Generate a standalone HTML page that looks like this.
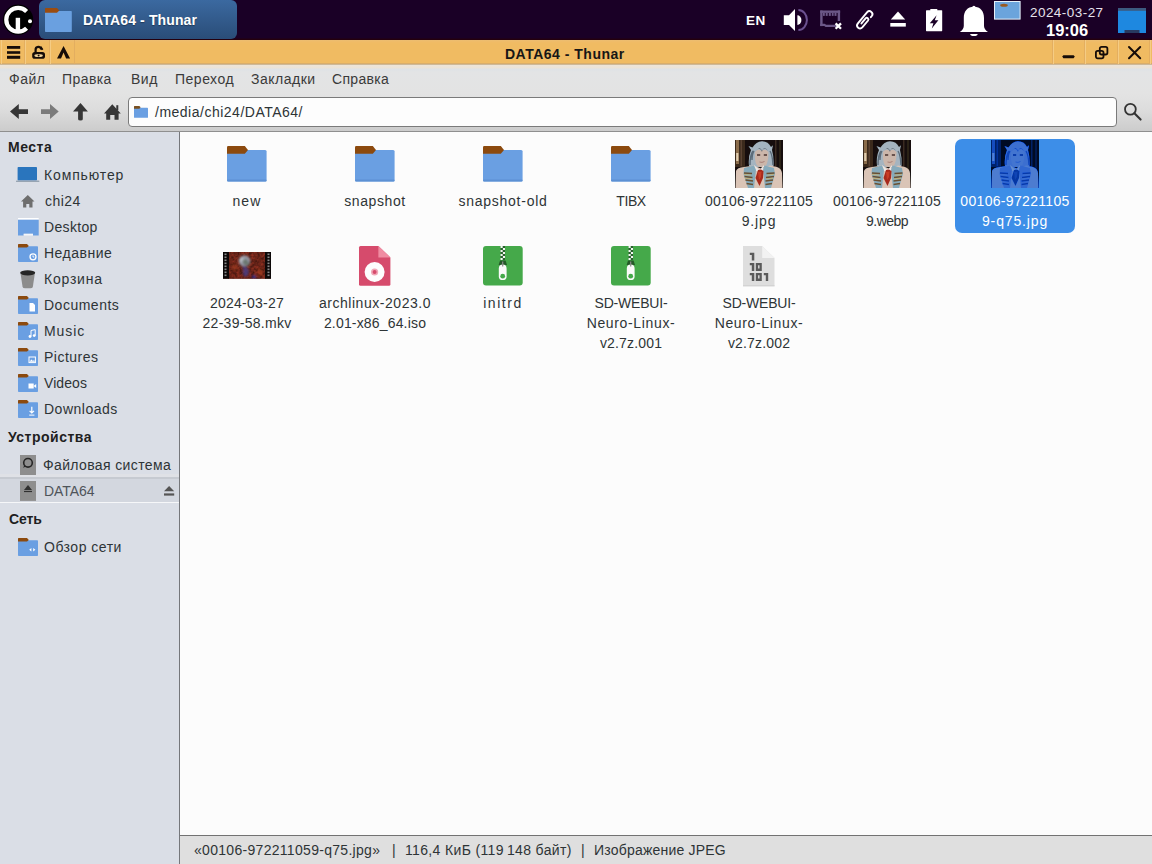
<!DOCTYPE html>
<html><head><meta charset="utf-8">
<style>
*{margin:0;padding:0;box-sizing:border-box}
html,body{width:1152px;height:864px;overflow:hidden;background:#fcfcfc;font-family:"Liberation Sans",sans-serif;font-size:14px;letter-spacing:0.5px;color:#2e3436}
.a{position:absolute}
svg{position:absolute;overflow:visible}
#panel{left:0;top:0;width:1152px;height:40px;background:linear-gradient(#1a0026 0,#1a0026 38px,#24000e 39px)}
#task{left:39px;top:0;width:198px;height:39px;border-radius:6px;background:linear-gradient(#3b69a0,#2a4d78)}
#title{left:0;top:40px;width:1152px;height:24px;background:linear-gradient(#ebbd72 0,#f0bb66 2px,#f0bb62 4px,#f0bb62 23px,#d9ad6a 23px)}
#menubar{left:0;top:64px;width:1152px;height:67px;background:linear-gradient(#cdb898 0px,#cdb898 1px,#ede4d8 1px,#ebe3d7 4px,#dee2e6 5px,#e3e4e5 8px,#e3e3e3 30px,#dddddd 45px,#cccccc 67px)}
#toolbar{left:0;top:92px;width:1152px;height:39px;background:linear-gradient(#e4e4e4,#d6d6d6)}
#tbline{left:0;top:131px;width:1152px;height:1px;background:#8f8f8f}
#side{left:0;top:132px;width:179px;height:732px;background:#dadee6}
#sideb{left:179px;top:132px;width:1px;height:732px;background:#75777b}
#main{left:180px;top:132px;width:972px;height:703px;background:#fcfcfc}
#status{left:180px;top:835px;width:972px;height:29px;background:#dfdfdf;border-top:1px solid #727272}
.t{position:absolute;white-space:nowrap;line-height:20px;height:20px}
.lbl{position:absolute;width:124px;text-align:center;line-height:20px;white-space:nowrap}
.hd{font-weight:bold;color:#1f1f1f}
.mn{color:#3a3a3a}
</style></head><body>
<div id="panel" class="a"></div>
<div id="task" class="a"></div>
<div id="title" class="a"></div>
<div id="menubar" class="a"></div>
<div id="tbline" class="a"></div>
<div id="side" class="a"></div>
<div id="sideb" class="a"></div>
<div id="main" class="a"></div>
<div id="status" class="a"></div>

<!-- panel texts -->
<div class="t" style="left:83px;top:10px;color:#fff;font-weight:bold;letter-spacing:0.12px;text-shadow:0 1px 1px rgba(0,0,0,0.35)">DATA64 - Thunar</div>
<div class="t" style="left:746px;top:11px;color:#fff;font-weight:bold;font-size:13.5px;letter-spacing:0.5px">EN</div>
<div class="t" style="left:1030px;top:3px;color:#e6e2ec;font-size:13.5px;letter-spacing:0.45px">2024-03-27</div>
<div class="t" style="left:1046px;top:20px;color:#fff;font-weight:bold;font-size:16.5px;letter-spacing:0px">19:06</div>

<!-- title -->
<div class="t" style="left:505px;top:44px;color:#161616;font-weight:bold">DATA64 - Thunar</div>

<!-- menu -->
<div id="M0" class="t mn" style="left:9px;top:69px;letter-spacing:0.5px">Файл</div>
<div id="M1" class="t mn" style="left:62px;top:69px;letter-spacing:0.42px">Правка</div>
<div id="M2" class="t mn" style="left:131px;top:69px;letter-spacing:0.5px">Вид</div>
<div id="M3" class="t mn" style="left:175px;top:69px;letter-spacing:0.5px">Переход</div>
<div id="M4" class="t mn" style="left:251px;top:69px;letter-spacing:0.5px">Закладки</div>
<div id="M5" class="t mn" style="left:332px;top:69px;letter-spacing:0.32px">Справка</div>

<!-- entry -->
<div class="a" style="left:128px;top:97px;width:989px;height:30px;background:#fdfdfd;border:1px solid #7a7a7a;border-radius:4px"></div>
<div id="P0" class="t" style="left:155px;top:102px;color:#2e3436;letter-spacing:0.5px">/media/chi24/DATA64/</div>

<!-- sidebar text -->
<div id="S0" class="t hd" style="left:8px;top:137px;letter-spacing:0.5px">Места</div>
<div id="S1" class="t" style="left:44px;top:165px;letter-spacing:0.86px">Компьютер</div>
<div id="S2" class="t" style="left:45px;top:191px;letter-spacing:0.48px">chi24</div>
<div id="S3" class="t" style="left:44px;top:217px;letter-spacing:0.33px">Desktop</div>
<div id="S4" class="t" style="left:44px;top:243px;letter-spacing:0.5px">Недавние</div>
<div id="S5" class="t" style="left:44px;top:269px;letter-spacing:0.77px">Корзина</div>
<div id="S6" class="t" style="left:44px;top:295px;letter-spacing:0.5px">Documents</div>
<div id="S7" class="t" style="left:44px;top:321px;letter-spacing:0.95px">Music</div>
<div id="S8" class="t" style="left:44px;top:347px;letter-spacing:0.5px">Pictures</div>
<div id="S9" class="t" style="left:44px;top:373px;letter-spacing:0.08px">Videos</div>
<div id="S10" class="t" style="left:44px;top:399px;letter-spacing:0.5px">Downloads</div>
<div id="S11" class="t hd" style="left:8px;top:427px;letter-spacing:0.5px">Устройства</div>
<div id="S12" class="t" style="left:43px;top:455px;letter-spacing:0.37px">Файловая система</div>
<div class="a" style="left:0;top:474px;width:179px;height:4px;background:#dfe1e6"></div><div class="a" style="left:0;top:477px;width:179px;height:26px;background:#d3d7df;border-top:2px solid #c6cad1;border-bottom:1px solid #f6f7f9"></div>
<div id="S13" class="t" style="left:44px;top:481px;color:#4f545a;letter-spacing:-0.08px">DATA64</div>
<div id="S14" class="t hd" style="left:9px;top:509px;letter-spacing:-0.1px">Сеть</div>
<div id="S15" class="t" style="left:44px;top:537px;letter-spacing:0.5px">Обзор сети</div>

<!-- selection -->
<div class="a" style="left:955px;top:139px;width:120px;height:94px;background:#3d8ee8;border-radius:7px"></div>

<!-- labels -->
<div id="L0" class="lbl" style="left:185px;top:191px;letter-spacing:1.15px">new</div>
<div id="L1" class="lbl" style="left:313px;top:191px;letter-spacing:0.61px">snapshot</div>
<div id="L2" class="lbl" style="left:441px;top:191px;letter-spacing:0.75px">snapshot-old</div>
<div id="L3" class="lbl" style="left:569px;top:191px;letter-spacing:-0.43px">TIBX</div>
<div id="L4" class="lbl" style="left:697px;top:191px;letter-spacing:0.22px">00106-97221105</div>
<div id="L5" class="lbl" style="left:697px;top:211px;letter-spacing:0.87px">9.jpg</div>
<div id="L6" class="lbl" style="left:825px;top:191px;letter-spacing:0.22px">00106-97221105</div>
<div id="L7" class="lbl" style="left:825px;top:211px;letter-spacing:-0.54px">9.webp</div>
<div id="L8" class="lbl" style="left:953px;top:191px;letter-spacing:0.32px;color:#fff">00106-97221105</div>
<div id="L9" class="lbl" style="left:953px;top:211px;letter-spacing:0.85px;color:#fff">9-q75.jpg</div>
<div id="L10" class="lbl" style="left:185px;top:293px;letter-spacing:0.22px">2024-03-27</div>
<div id="L11" class="lbl" style="left:185px;top:313px;letter-spacing:0.28px">22-39-58.mkv</div>
<div id="L12" class="lbl" style="left:313px;top:293px;letter-spacing:0.54px">archlinux-2023.0</div>
<div id="L13" class="lbl" style="left:313px;top:313px;letter-spacing:0.17px">2.01-x86_64.iso</div>
<div id="L14" class="lbl" style="left:441px;top:293px;letter-spacing:1.54px">initrd</div>
<div id="L15" class="lbl" style="left:569px;top:293px;letter-spacing:-0.2px">SD-WEBUI-</div>
<div id="L16" class="lbl" style="left:569px;top:313px;letter-spacing:0.65px">Neuro-Linux-</div>
<div id="L17" class="lbl" style="left:569px;top:333px;letter-spacing:0.16px">v2.7z.001</div>
<div id="L18" class="lbl" style="left:697px;top:293px;letter-spacing:-0.2px">SD-WEBUI-</div>
<div id="L19" class="lbl" style="left:697px;top:313px;letter-spacing:0.65px">Neuro-Linux-</div>
<div id="L20" class="lbl" style="left:697px;top:333px;letter-spacing:0.16px">v2.7z.002</div>

<!-- status -->
<div class="t" style="left:194px;top:840px;letter-spacing:0.3px">«00106-972211059-q75.jpg»</div>
<div class="t" style="left:392px;top:840px">|</div>
<div class="t" style="left:405px;top:840px;letter-spacing:0.35px">116,4 КиБ (119&#8201;148 байт)</div>
<div class="t" style="left:581px;top:840px">|</div>
<div class="t" style="left:594px;top:840px;letter-spacing:0.2px">Изображение JPEG</div>

<!-- symbol defs -->
<svg width="0" height="0" style="position:absolute">
<defs>
<symbol id="fold" viewBox="0 0 40 36"><rect x="0" y="4" width="39.6" height="31.5" rx="1.5" fill="#6a9fe2"/><rect x="0" y="33.5" width="39.6" height="2" rx="1" fill="#5c90d3"/><path d="M0,1.2 Q0,0 1.2,0 H17.8 L21,3.9 L17.8,7.8 H0 Z" fill="#8c4a0e"/></symbol>
<symbol id="sfold" viewBox="0 0 20 18"><rect x="0" y="2.3" width="20" height="15.7" rx="0.8" fill="#6a9fe2"/><path d="M0,0.6 Q0,0 0.6,0 H9 L10.8,1.9 L9,3.6 H0 Z" fill="#8c4a0e"/></symbol>
<symbol id="portrait" viewBox="0 0 48 48">
<filter id="pb" x="0" y="0" width="1" height="1"><feGaussianBlur stdDeviation="0.55"/></filter>
<g filter="url(#pb)">
<rect width="48" height="48" fill="#141110"/>
<rect x="0" y="0" width="10" height="27" fill="#3a2a1c"/>
<rect x="1" y="0" width="3" height="24" fill="#8a6c4c"/>
<rect x="1.2" y="13" width="2.2" height="8" fill="#e0ceb0"/>
<rect x="5.5" y="0" width="1.5" height="26" fill="#5a4230"/>
<rect x="40" y="0" width="1.5" height="30" fill="#3a2c22"/>
<rect x="44" y="0" width="2" height="34" fill="#2a2018"/>
<path d="M14,26 Q13,17 16,10 L13.5,6 L17.5,7.5 Q21,1.5 27,1.2 Q33.5,1.5 36,7 L38,5.2 L37,10 Q39,17 38.5,26 L34,27 L20,27 Z" fill="#a4b4c0"/>
<path d="M15,25 Q15,15 18,11 M38,25 Q37.5,15 35,11 M17,20 Q17,14 19,11" stroke="#5c6c7a" stroke-width="1.4" fill="none"/>
<path d="M20,12 Q19.5,22 22,25.5 Q26,28.5 30.5,26 Q33.5,22 33.5,12 Q30,8 26.5,11 Q23,8 20,12 Z" fill="#cbb6aa"/>
<path d="M21,11 Q24,6 27,10.5 Q30,6 33,11 L31,9 Q27.5,8 27,12 Q26,8 22.5,9 Z" fill="#3e4650"/>
<path d="M22,15 H25.2 M28.8,15 H32" stroke="#4a3230" stroke-width="1.6"/>
<path d="M24.5,22 Q27,23 29.5,21.5" stroke="#a88078" stroke-width="1" fill="none"/>
<path d="M0.5,48 L1,31 Q2,27.5 9,27 L19,25.5 L27,29 L35,25.5 L42,27 Q46.5,28.5 47,33 L47.5,48 Z" fill="#dac4b6"/>
<path d="M19,25 L24.5,30 L29,25 L28.5,31 L20,31 Z" fill="#ece6e4"/>
<path d="M9,28 L19,25.5 L21,30 L19,48 L13,48 L8.5,34 Z" fill="#86aabb"/>
<path d="M29.5,25.5 L39,28 L40,34 L36,48 L30,48 L28,30 Z" fill="#86aabb"/>
<path d="M9,33 L17,33.5 M9.5,36.5 L17.5,37.5 M10.5,40 L18,41 M11.5,43.5 L18,44.5 M39.5,33 L31.5,33.5 M39,36.5 L31,37.5 M38,40 L30.5,41 M37,43.5 L30.5,44.5" stroke="#6a5030" stroke-width="1.5"/>
<path d="M9,34.5 L16,35.2 M9.8,38.2 L17,39 M38.8,34.5 L32,35.2 M38,38.2 L31,39" stroke="#c8b070" stroke-width="0.9"/>
<path d="M23,30 L26,29.5 L28.5,31 L28,38 L24.5,46 L20.5,38 Z" fill="#a82a1c"/>
<path d="M23,32 L26.5,31.5 L26,37 L24,40 Z" fill="#c83c28"/>
</g>
</symbol>
<symbol id="zip" viewBox="0 0 40 40"><rect x="0" y="0" width="39.7" height="39.4" rx="3" fill="#45a94a"/>
<g fill="#f4f4f4"><rect x="17.6" y="0" width="2.2" height="2"/><rect x="19.8" y="2" width="2.2" height="2"/><rect x="17.6" y="4" width="2.2" height="2"/><rect x="19.8" y="6" width="2.2" height="2"/><rect x="17.6" y="8" width="2.2" height="2"/><rect x="19.8" y="10" width="2.2" height="2"/><rect x="17.6" y="12" width="2.2" height="2"/></g>
<g fill="#2b5f2e"><rect x="19.8" y="0" width="2.2" height="2"/><rect x="17.6" y="2" width="2.2" height="2"/><rect x="19.8" y="4" width="2.2" height="2"/><rect x="17.6" y="6" width="2.2" height="2"/><rect x="19.8" y="8" width="2.2" height="2"/><rect x="17.6" y="10" width="2.2" height="2"/><rect x="19.8" y="12" width="2.2" height="2"/></g>
<path d="M17,14.5 L22.6,14.5 L24,19 L15.6,19 Z" fill="#245a28"/>
<rect x="15.8" y="18.5" width="7.8" height="15.6" rx="3.9" fill="#fafafa"/>
<circle cx="19.7" cy="30.2" r="2.4" fill="#45a94a"/>
<rect x="19.1" y="15.5" width="1.2" height="5" fill="#8a8a8a"/>
</symbol>
</defs>
</svg>

<!-- big folders -->
<svg style="left:227px;top:146px" width="40" height="36"><use href="#fold"/></svg>
<svg style="left:355px;top:146px" width="40" height="36"><use href="#fold"/></svg>
<svg style="left:483px;top:146px" width="40" height="36"><use href="#fold"/></svg>
<svg style="left:611px;top:146px" width="40" height="36"><use href="#fold"/></svg>
<!-- portraits -->
<svg style="left:735px;top:140px" width="48" height="48"><use href="#portrait"/></svg>
<svg style="left:863px;top:140px" width="48" height="48"><use href="#portrait"/></svg>
<div class="a" style="left:991px;top:140px;width:48px;height:48px;isolation:isolate"><svg style="left:0;top:0" width="48" height="48"><use href="#portrait"/><rect width="48" height="48" fill="#2a7ae8" style="mix-blend-mode:color"/><rect width="48" height="48" fill="#5a88c8" style="mix-blend-mode:multiply" opacity="0.85"/></svg></div>

<!-- video -->
<svg style="left:223px;top:252px" width="48" height="27">
<defs>
<filter id="nz" x="0" y="0" width="1" height="1" color-interpolation-filters="sRGB"><feTurbulence type="fractalNoise" baseFrequency="0.35" numOctaves="2" seed="7"/><feColorMatrix values="0.9 0 0 0 0  0.3 0 0 0 0  0.2 0 0 0 0  0 0 0 0 0.55"/></filter>
<filter id="bl" x="-0.5" y="-0.5" width="2" height="2"><feGaussianBlur stdDeviation="0.9"/></filter>
</defs>
<rect width="48" height="26.7" fill="#5e2016"/>
<rect x="5" y="0" width="38" height="26.7" filter="url(#nz)"/>
<clipPath id="vclip"><rect x="0" y="0" width="48" height="26.7"/></clipPath>
<g filter="url(#bl)" clip-path="url(#vclip)">
<circle cx="21.5" cy="9" r="5.8" fill="#9496a4"/><circle cx="19" cy="8" r="2.5" fill="#b8bcc4"/>
<path d="M19,9 Q22,5 25,9 L27,13 Q24,14 21,13 Z" fill="#5a6a5a" opacity="0.7"/>
<path d="M19.5,14 Q25,14 26,19 Q26,24 22,25 Q19,23 20,18 Z" fill="#4a3c82" opacity="0.85"/>
<circle cx="31" cy="25" r="2.2" fill="#3a3090" opacity="0.8"/>
<circle cx="37" cy="20" r="3" fill="#b04020" opacity="0.6"/>
<circle cx="12" cy="15" r="3" fill="#a03a20" opacity="0.6"/>
</g>
<rect x="0" y="0" width="6" height="26.7" fill="#0c0808"/>
<rect x="42" y="0" width="6" height="26.7" fill="#0c0808"/>
<g fill="#8a8a8a"><rect x="1.5" y="1.5" width="2" height="1.6"/><rect x="1.5" y="4.5" width="2" height="1.6"/><rect x="1.5" y="7.5" width="2" height="1.6"/><rect x="1.5" y="10.5" width="2" height="1.6"/><rect x="1.5" y="13.5" width="2" height="1.6"/><rect x="1.5" y="16.5" width="2" height="1.6"/><rect x="1.5" y="19.5" width="2" height="1.6"/><rect x="1.5" y="22.5" width="2" height="1.6"/>
<rect x="44.5" y="1.5" width="2" height="1.6"/><rect x="44.5" y="4.5" width="2" height="1.6"/><rect x="44.5" y="7.5" width="2" height="1.6"/><rect x="44.5" y="10.5" width="2" height="1.6"/><rect x="44.5" y="13.5" width="2" height="1.6"/><rect x="44.5" y="16.5" width="2" height="1.6"/><rect x="44.5" y="19.5" width="2" height="1.6"/><rect x="44.5" y="22.5" width="2" height="1.6"/></g>
</svg>

<!-- iso -->
<svg style="left:359px;top:246px" width="32" height="40">
<path d="M1.5,0 H19.4 L31.4,11.4 V38.2 Q31.4,39.7 29.9,39.7 H1.5 Q0,39.7 0,38.2 V1.5 Q0,0 1.5,0 Z" fill="#d64b6c"/>
<path d="M19.4,0 L31.4,11.4 H19.4 Z" fill="#f08ca2"/>
<circle cx="15.6" cy="26" r="10" fill="#fdfdfd"/>
<circle cx="15.6" cy="26" r="3.6" fill="#f0a8b8"/>
<circle cx="15.6" cy="26" r="2" fill="#d64b6c"/>
</svg>

<!-- zips -->
<svg style="left:483px;top:246px" width="40" height="40"><use href="#zip"/></svg>
<svg style="left:611px;top:246px" width="40" height="40"><use href="#zip"/></svg>

<!-- binary -->
<svg style="left:743px;top:246px" width="32" height="41">
<path d="M0,0 H19.2 L31.5,12 V40.3 H0 Z" fill="#dedede"/>
<path d="M19.2,0 V12 H31.5 Z" fill="#f2f2f2"/>
<rect x="0" y="39.3" width="31.5" height="1" fill="#cfcfcf"/>
<g fill="#5a5a5a">
<path d="M6.8,6.8 H11.3 V14.6 H8.8 V9 H6.8 Z"/>
<path d="M6.8,17 H11.3 V24.9 H8.8 V19.2 H6.8 Z"/>
<path d="M12.8,17 H18.8 V24.9 H12.8 Z M15.1,19.3 V22.6 H16.5 V19.3 Z" fill-rule="evenodd"/>
<path d="M6.8,27 H11.3 V34.9 H8.8 V29.2 H6.8 Z"/>
<path d="M12.8,27 H18.8 V34.9 H12.8 Z M15.1,29.3 V32.6 H16.5 V29.3 Z" fill-rule="evenodd"/>
<path d="M20.8,27 H25.2 V34.9 H22.8 V29.2 H20.8 Z"/>
</g>
</svg>

<!-- logo -->
<svg style="left:0;top:0" width="40" height="40">
<circle cx="18.1" cy="19.7" r="15.1" fill="#000"/>
<path d="M26.6,11.4 A11.9,11.9 0 1 0 26.6,28.2" fill="none" stroke="#fff" stroke-width="4.2"/>
<rect x="15.7" y="17.8" width="4.4" height="13.5" fill="#fff"/>
<circle cx="30" cy="21.3" r="2" fill="#fff"/>
</svg>
<!-- taskbar folder -->
<svg style="left:44.5px;top:7.8px" width="27" height="24"><rect x="0" y="2.9" width="26.8" height="21.1" rx="0.8" fill="#6aa0e0"/><path d="M0,0.8 Q0,0 0.8,0 H12 L14.3,2.6 L12,4.8 H0 Z" fill="#9a4c10"/></svg>

<!-- systray -->
<svg style="left:783px;top:8px" width="26" height="24">
<path d="M0.8,7.2 H6 L12,1 V23 L6,17 H0.8 Z" fill="#fff"/>
<path d="M14.4,7.2 A4,4.9 0 0 1 14.4,17 Z" fill="#fff"/>
<path d="M15.4,2 A8.5,10 0 0 1 15.4,22" fill="none" stroke="#6c5190" stroke-width="2"/>
</svg>
<svg style="left:820px;top:10px" width="24" height="20"><g fill="#6c5888">
<rect x="0.2" y="0.5" width="19.9" height="2.4"/><rect x="0.2" y="0.5" width="2.4" height="15.6"/><rect x="17.7" y="0.5" width="2.4" height="10.5"/>
<path d="M0.2,13.7 H4.6 L6.2,14.7 H17.3 V17.1 H5.6 L4.2,16.1 H0.2 Z"/>
<rect x="3" y="2.9" width="1.8" height="3"/><rect x="5.7" y="2.9" width="2" height="3"/><rect x="8.8" y="2.9" width="2" height="3"/><rect x="11.8" y="2.9" width="1.8" height="3"/><rect x="14.5" y="2.9" width="2" height="3"/></g>
<path d="M15.6,13.4 L21,18.8 M21,13.4 L15.6,18.8" stroke="#fff" stroke-width="2.3"/>
</svg>
<svg style="left:852px;top:6px" width="26" height="28"><path d="M18.84,11.17 L19.8,10.02 A3,3 0 0 0 15.2,6.18 L5.7,17.58 A3,3 0 0 0 10.3,21.42 L16.07,14.5 A1.6,1.6 0 0 0 13.61,12.46 L9.45,17.45" fill="none" stroke="#fff" stroke-width="1.9" stroke-linecap="round"/></svg>
<svg style="left:890px;top:11px" width="17" height="16">
<path d="M8,0.4 L15.2,8.6 H0.8 Z" fill="#fff"/>
<rect x="0.3" y="12" width="15.5" height="3.6" fill="#fff"/>
</svg>
<svg style="left:926px;top:8.8px" width="17" height="23">
<rect x="4.3" y="0" width="7" height="2" fill="#fff"/>
<rect x="0" y="1.2" width="16.2" height="21" rx="0.6" fill="#fff"/>
<path d="M10.6,6.2 L3.8,14.2 H7.4 L5.8,19.6 L12.4,11.2 H8.8 Z" fill="#1a0026"/>
</svg>
<svg style="left:959px;top:5px" width="30" height="32">
<circle cx="14.9" cy="2.3" r="1.6" fill="#fff"/>
<path d="M14.9,1.8 C21.6,1.8 25,6.5 25,13 V21 Q25.2,24.5 29,27 H0.8 Q4.6,24.5 4.8,21 V13 C4.8,6.5 8.2,1.8 14.9,1.8 Z" fill="#fff"/>
<path d="M11.2,28.9 H18.6 Q18.6,30.9 14.9,30.9 Q11.2,30.9 11.2,28.9 Z" fill="#fff"/>
</svg>
<svg style="left:993.5px;top:0.8px" width="27" height="19">
<rect x="0.5" y="0.5" width="25.6" height="17.6" fill="#6ba4dc" stroke="#e8f0f8" stroke-width="1"/>
<ellipse cx="10" cy="4.2" rx="3.8" ry="1.5" fill="#9a5a20"/>
</svg>
<svg style="left:1118px;top:8px" width="29" height="26">
<rect x="0" y="0" width="28" height="25" fill="#1e88e0"/>
<rect x="0" y="0" width="28" height="2.8" fill="#3c5a80"/>
<rect x="6.5" y="22" width="15" height="3" fill="#283a60"/>
</svg>

<!-- title bar separators -->
<div class="a" style="left:1px;top:40px;width:1px;height:24px;background:#f5cc84"></div>
<div class="a" style="left:24px;top:40px;width:1px;height:24px;background:#e3ae60"></div>
<div class="a" style="left:25px;top:40px;width:1px;height:24px;background:#f5cc84"></div>
<div class="a" style="left:49px;top:40px;width:1px;height:24px;background:#e3ae60"></div>
<div class="a" style="left:50px;top:40px;width:1px;height:24px;background:#f5cc84"></div>
<div class="a" style="left:74px;top:40px;width:1px;height:24px;background:#e3ae60"></div>
<div class="a" style="left:1052px;top:40px;width:1px;height:24px;background:#e3ae60"></div>
<div class="a" style="left:1053px;top:40px;width:1px;height:24px;background:#f5cc84"></div>
<div class="a" style="left:1084px;top:40px;width:1px;height:24px;background:#e3ae60"></div>
<div class="a" style="left:1085px;top:40px;width:1px;height:24px;background:#f5cc84"></div>
<div class="a" style="left:1117px;top:40px;width:1px;height:24px;background:#e3ae60"></div>
<div class="a" style="left:1118px;top:40px;width:1px;height:24px;background:#f5cc84"></div>
<div class="a" style="left:1149px;top:40px;width:1px;height:24px;background:#e3ae60"></div>
<div class="a" style="left:1150px;top:40px;width:1px;height:24px;background:#f5cc84"></div>
<!-- hamburger -->
<svg style="left:7px;top:46px" width="14" height="13"><rect x="0" y="0" width="13.2" height="2.8" fill="#160c08"/><rect x="0" y="5.2" width="13.2" height="2.6" fill="#160c08"/><rect x="0" y="9.8" width="13.2" height="3" fill="#160c08"/></svg>
<!-- unlock -->
<svg style="left:32px;top:46px" width="14" height="13">
<path d="M3.6,7 V4.2 A2.9,3 0 0 1 9.4,3.6" fill="none" stroke="#160c08" stroke-width="2.2"/>
<path d="M8.6,0.8 L10.6,3.8" stroke="#160c08" stroke-width="1.8"/>
<rect x="0.2" y="6" width="12.8" height="6.8" rx="2.6" fill="#160c08"/>
<ellipse cx="6.6" cy="9.4" rx="4.2" ry="1.5" fill="#f1d39a"/>
<circle cx="6.6" cy="9.4" r="1" fill="#160c08"/>
</svg>
<!-- up chevron -->
<svg style="left:57px;top:46px" width="14" height="13"><path d="M0,12.6 L6.55,0 L13.1,12.6 H9.1 L6.55,6.6 L4,12.6 Z" fill="#160c08"/></svg>
<!-- min -->
<svg style="left:1062px;top:54.5px" width="14" height="4"><path d="M1.4,0.2 H11.6 L12.8,1.6 L11.6,3.2 H1.4 L0.2,1.6 Z" fill="#160c08"/></svg>
<!-- restore -->
<svg style="left:1095px;top:46px" width="14" height="14">
<rect x="4.8" y="0.9" width="7.6" height="7.6" rx="1.8" fill="none" stroke="#160c08" stroke-width="1.8"/>
<rect x="0.9" y="4.8" width="7.6" height="7.6" rx="1.8" fill="none" stroke="#160c08" stroke-width="1.8"/>
</svg>
<!-- close -->
<svg style="left:1128px;top:46px" width="14" height="14"><path d="M1,1 L12.2,12.2 M12.2,1 L1,12.2" stroke="#160c08" stroke-width="2" stroke-linecap="round"/></svg>

<!-- toolbar icons -->
<svg style="left:10px;top:103.8px" width="19" height="16"><path d="M0,7.5 L8.8,0 V5.2 H18 V9.9 H8.8 V14.9 Z" fill="#363636"/></svg>
<svg style="left:41px;top:103.8px" width="19" height="16"><path d="M17.7,7.5 L9,0 V5.2 H0 V9.9 H9 V14.9 Z" fill="#7b7b7b"/></svg>
<svg style="left:73px;top:103px" width="16" height="18"><path d="M7.5,0 L14.9,8.6 H9.8 V16.2 Q9.8,17.6 7.5,17.6 Q5.1,17.6 5.1,16.2 V8.6 H0 Z" fill="#363636"/></svg>
<svg style="left:103.5px;top:104px" width="17" height="16">
<path d="M8.3,0.2 L16.8,9.6 H14.6 V15.8 H10.5 V11 H6.2 V15.8 H2.2 V9.6 H0 Z" fill="#363636"/>
<rect x="12.3" y="1.2" width="2" height="5" fill="#363636"/>
</svg>
<!-- entry folder -->
<svg style="left:134px;top:106px" width="14" height="12"><rect x="0" y="1.8" width="14" height="10" rx="0.6" fill="#6a9fe2"/><path d="M0,0.4 Q0,0 0.4,0 H5.4 L6.6,1.2 L5.4,2.8 H0 Z" fill="#7a5020"/></svg>
<!-- search -->
<svg style="left:1122px;top:101px" width="22" height="22"><circle cx="8.4" cy="8.2" r="5.4" fill="none" stroke="#333" stroke-width="1.8"/><path d="M12.4,12.2 L18.6,18.6" stroke="#333" stroke-width="2.1" stroke-linecap="round"/></svg>

<!-- sidebar icons -->
<svg style="left:16px;top:167px" width="24" height="16"><rect x="1.6" y="0" width="19.4" height="13.5" rx="0.8" fill="#2a75bd"/><rect x="0" y="13.6" width="23.4" height="1.5" rx="0.7" fill="#97a4b2"/></svg>
<svg style="left:21px;top:195px" width="14" height="13"><path d="M6.8,0 L13.5,6.5 H11.5 V12.6 H8.3 V9 H5.3 V12.6 H2.1 V6.5 H0 Z" fill="#6e6e6e"/></svg>
<svg style="left:17.7px;top:218px" width="21" height="18"><rect x="0" y="0" width="20.7" height="1.7" fill="#fff"/><path d="M0,1.7 H20.7 V17.5 H15 V15.8 H5.7 V17.5 H0 Z" fill="#6a9fe2"/><rect x="5.7" y="15.8" width="9.3" height="1.7" fill="#f4f6fa"/></svg>
<svg style="left:18px;top:244px" width="20" height="18"><use href="#sfold"/><circle cx="15" cy="12.8" r="3" fill="none" stroke="#fff" stroke-width="1.3"/><path d="M15,11.4 V13 H16.3" stroke="#fff" stroke-width="0.9" fill="none"/></svg>
<svg style="left:20px;top:269.5px" width="16" height="19"><path d="M0.4,2.6 L2.6,17 Q3,18.3 5,18.3 H10.4 Q12.4,18.3 12.8,17 L15,2.6 Z" fill="#8c8c8c"/><ellipse cx="7.7" cy="2.8" rx="7.5" ry="2.6" fill="#262626"/></svg>
<svg style="left:18px;top:296px" width="20" height="18"><use href="#sfold"/><path d="M11.5,7 H15 L17,9 V15.5 H11.5 Z" fill="#fff"/></svg>
<svg style="left:18px;top:322px" width="20" height="18"><use href="#sfold"/><path d="M13,14.5 V8.5 L17.2,7.6 V13.6" fill="none" stroke="#fff" stroke-width="1"/><circle cx="12" cy="14.5" r="1.4" fill="#fff"/><circle cx="16.2" cy="13.6" r="1.4" fill="#fff"/></svg>
<svg style="left:18px;top:348px" width="20" height="18"><use href="#sfold"/><rect x="11" y="9" width="6.4" height="5.6" fill="none" stroke="#fff" stroke-width="1"/><path d="M11.5,13.8 L13.4,11.5 L15,13 L16,12 L17,13.8 Z" fill="#fff"/></svg>
<svg style="left:18px;top:374px" width="20" height="18"><use href="#sfold"/><rect x="10.5" y="9.5" width="5.2" height="5" fill="#fff"/><path d="M15.5,12 L18.2,10 V14 Z" fill="#fff"/></svg>
<svg style="left:18px;top:400px" width="20" height="18"><use href="#sfold"/><path d="M13.8,6.8 V12.8 M11.6,10.8 L13.8,13 L16,10.8" fill="none" stroke="#fff" stroke-width="1.2"/><rect x="11.2" y="14.6" width="5.2" height="1" fill="#fff"/></svg>
<svg style="left:20px;top:455px" width="16" height="20"><rect x="0" y="0" width="16" height="20" fill="#8e8e8e"/><circle cx="8" cy="7.8" r="4.3" fill="none" stroke="#262626" stroke-width="1.6"/><path d="M4.6,10 L3,12.8 L6.2,11.6 Z" fill="#262626"/></svg>
<svg style="left:20px;top:481px" width="16" height="20"><rect x="0" y="0" width="16" height="19.9" fill="#8e8e8e"/><path d="M8,4.1 L12,8.9 H4 Z" fill="#303030"/><rect x="4" y="9.9" width="8" height="1.2" fill="#303030"/></svg>
<svg style="left:163.8px;top:486.2px" width="11" height="10"><path d="M5.1,0 L10.2,5.3 H0 Z" fill="#555"/><rect x="0" y="7.4" width="10.2" height="2.2" fill="#555"/></svg>
<svg style="left:18px;top:538px" width="20" height="18"><use href="#sfold"/><path d="M11.2,11.8 L13.4,10 V13.6 Z M17.4,11.8 L15.2,10 V13.6 Z" fill="#fff"/></svg>

</body></html>
